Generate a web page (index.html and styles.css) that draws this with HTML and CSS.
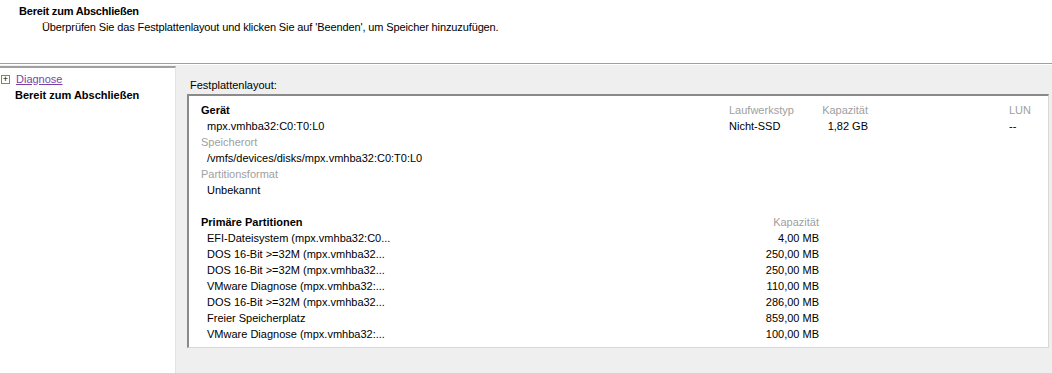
FILE: index.html
```html
<!DOCTYPE html>
<html lang="de">
<head>
    <meta charset="UTF-8">
    <title>Speicher hinzufügen</title>
    <link rel="stylesheet" href="styles.css">
</head>
<body>
    <div class="header">
        <div class="header-title">Bereit zum Abschließen</div>
        <div class="header-sub">Überprüfen Sie das Festplattenlayout und klicken Sie auf 'Beenden', um Speicher hinzuzufügen.</div>
    </div>

    <div class="main">
        <div class="nav">
            <div class="nav-item">
                <span class="expander">+</span>
                <a class="nav-link" href="#">Diagnose</a>
            </div>
            <div class="nav-item current">Bereit zum Abschließen</div>
        </div>

        <div class="content">
            <div class="group-label">Festplattenlayout:</div>
            <div class="layout-box">
                <div class="device-grid">
                    <div class="bold">Gerät</div>
                    <div class="muted">Laufwerkstyp</div>
                    <div class="muted right">Kapazität</div>
                    <div></div>
                    <div class="muted">LUN</div>

                    <div class="indent">mpx.vmhba32:C0:T0:L0</div>
                    <div>Nicht-SSD</div>
                    <div class="right">1,82 GB</div>
                    <div></div>
                    <div>--</div>
                </div>
                <div class="row muted">Speicherort</div>
                <div class="row indent">/vmfs/devices/disks/mpx.vmhba32:C0:T0:L0</div>
                <div class="row muted">Partitionsformat</div>
                <div class="row indent">Unbekannt</div>

                <div class="part-grid">
                    <div class="bold">Primäre Partitionen</div>
                    <div class="muted right">Kapazität</div>

                    <div class="indent">EFI-Dateisystem (mpx.vmhba32:C0...</div>
                    <div class="right">4,00 MB</div>
                    <div class="indent">DOS 16-Bit &gt;=32M (mpx.vmhba32...</div>
                    <div class="right">250,00 MB</div>
                    <div class="indent">DOS 16-Bit &gt;=32M (mpx.vmhba32...</div>
                    <div class="right">250,00 MB</div>
                    <div class="indent">VMware Diagnose (mpx.vmhba32:...</div>
                    <div class="right">110,00 MB</div>
                    <div class="indent">DOS 16-Bit &gt;=32M (mpx.vmhba32...</div>
                    <div class="right">286,00 MB</div>
                    <div class="indent">Freier Speicherplatz</div>
                    <div class="right">859,00 MB</div>
                    <div class="indent">VMware Diagnose (mpx.vmhba32:...</div>
                    <div class="right">100,00 MB</div>
                </div>
            </div>
        </div>
    </div>
</body>
</html>
```

FILE: styles.css
```css
html, body {
    margin: 0;
    height: 100%;
}

body {
    font-family: Tahoma, "Liberation Sans", Arial, sans-serif;
    font-size: 11px;
    color: #000;
    background-color: #efefef;
    display: flex;
    flex-direction: column;
    overflow: hidden;
}

.header {
    background: #fff;
    height: 64px;
    box-sizing: border-box;
    padding-top: 3px;
    border-bottom: 1px solid #a0a0a0;
    box-shadow: 0 1px 0 #ffffff;
}

.header-title {
    font-weight: bold;
    line-height: 16px;
    padding-left: 19px;
    letter-spacing: -0.2px;
}

.header-sub {
    line-height: 16px;
    padding-left: 42px;
    letter-spacing: -0.12px;
}

.main {
    flex: 1;
    display: flex;
    margin-top: 2px;
}

.nav {
    width: 175px;
    background: #fff;
    border-top: 2px solid #a0a0a0;
    border-right: 1px solid #e3e3e3;
    padding-top: 3px;
}

.nav-item {
    line-height: 16px;
    height: 16px;
    display: flex;
    align-items: center;
    padding-left: 15px;
}

.nav-item:first-child {
    padding-left: 1px;
}

.expander {
    width: 7px;
    height: 7px;
    border: 1px solid #808080;
    font-size: 9px;
    line-height: 7px;
    text-align: center;
    margin-right: 6px;
    color: #000;
}

.nav-link {
    color: #7b3fa8;
    text-decoration: underline;
}

.current {
    font-weight: bold;
}

.content {
    flex: 1;
    padding: 12px 3px 0 11px;
}

.group-label {
    line-height: 14px;
    padding-left: 3px;
    margin-bottom: 2px;
}

.layout-box {
    background: #fff;
    border-top: 2px solid #8a8a8a;
    border-left: 2px solid #8a8a8a;
    border-right: 1px solid #d8d8d8;
    border-bottom: 1px solid #d8d8d8;
    height: 254px;
    box-sizing: border-box;
    padding: 6px 0 0 12px;
}

.device-grid {
    display: grid;
    grid-template-columns: 528px 71px 68px 141px auto;
    grid-auto-rows: 16px;
    line-height: 16px;
}

.part-grid {
    display: grid;
    grid-template-columns: 559px 59px;
    grid-auto-rows: 16px;
    line-height: 16px;
    margin-top: 16px;
}

.row {
    line-height: 16px;
    height: 16px;
}

.bold {
    font-weight: bold;
}

.muted {
    color: #a0a0a0;
}

.right {
    text-align: right;
}

.indent {
    padding-left: 6px;
}
```
